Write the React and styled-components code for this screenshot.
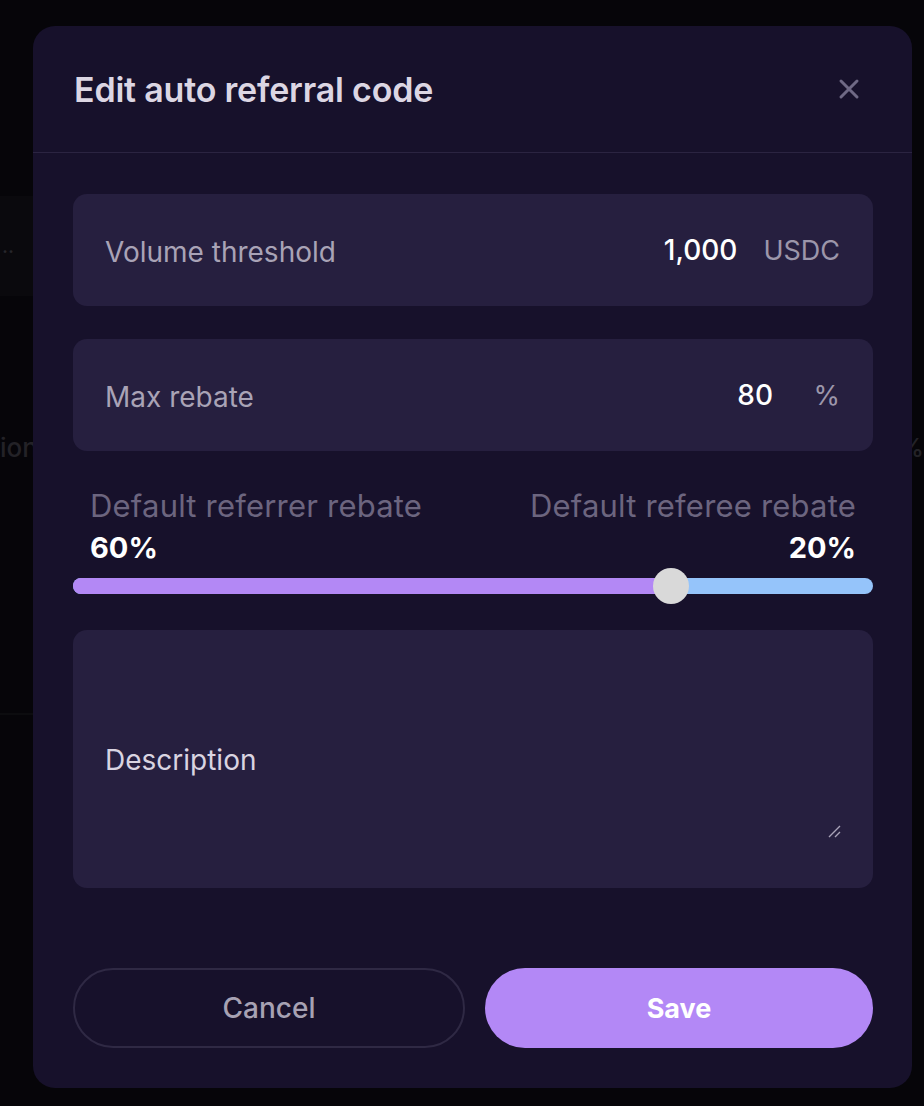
import React, { useState } from "react";
import styled, { createGlobalStyle } from "styled-components";

const Global = createGlobalStyle`
  html, body {
    margin: 0;
    padding: 0;
    background: #060509;
    font-family: Inter, "Noto Sans", sans-serif;
  }
  * { box-sizing: border-box; }
`;

const Page = styled.div`
  position: relative;
  width: 924px;
  height: 1106px;
  overflow: hidden;
  background: #060509;
`;

const Backdrop = styled.div`
  display: flex;
  flex-direction: column;
  padding-top: 196px;
  color: #232227;
  font-size: 26px;
  font-weight: 500;
`;

const BgPanel = styled.div`
  height: 100px;
  width: 60px;
  background: #0a090d;
  display: flex;
  align-items: center;
  padding-left: 2px;
  color: #27262b;
  font-size: 20px;
`;

const BgRow = styled.div`
  display: flex;
  justify-content: space-between;
  margin-top: 136px;
  padding-right: 0;
`;

const BgLine = styled.div`
  margin-top: 250px;
  height: 2px;
  width: 60px;
  background: #0c0c0f;
`;

const Overlay = styled.div`
  position: absolute;
  inset: 0;
  display: flex;
  justify-content: flex-start;
  align-items: flex-start;
  padding: 26px 0 0 33px;
`;

const Modal = styled.div`
  width: 879px;
  height: 1062px;
  background: #17112b;
  border-radius: 22px;
  display: flex;
  flex-direction: column;
`;

const Header = styled.div`
  height: 127px;
  padding: 0 52px 0 41px;
  display: flex;
  align-items: center;
  justify-content: space-between;
  border-bottom: 1px solid #2b2441;
`;

const Title = styled.h2`
  margin: 0;
  font-size: 34px;
  font-weight: 600;
  letter-spacing: -0.2px;
  color: #dcd6e3;
`;

const CloseButton = styled.button`
  background: none;
  border: none;
  padding: 0;
  width: 22px;
  height: 22px;
  display: flex;
  cursor: pointer;
`;

const Body = styled.div`
  padding: 41px 39px 40px 40px;
  display: flex;
  flex-direction: column;
`;

const Field = styled.div`
  height: 112px;
  margin-top: ${(p) => p.$mt || 0}px;
  border-radius: 14px;
  background: #261f3f;
  display: flex;
  align-items: center;
  padding: 0 33px 0 32px;
`;

const FieldLabel = styled.span`
  flex: 1;
  font-size: 28px;
  color: #a9a3b6;
  padding-top: 4px;
`;

const Value = styled.span`
  font-size: 28px;
  font-weight: 500;
  color: #ffffff;
`;

const Unit = styled.span`
  margin-left: 26px;
  min-width: ${(p) => p.$w || 0}px;
  text-align: right;
  font-size: 27px;
  color: #9c96aa;
`;

const SliderBlock = styled.div`
  margin-top: 38px;
  display: flex;
  flex-direction: column;
`;

const SplitRow = styled.div`
  display: flex;
  justify-content: space-between;
  padding: 0 17px;
`;

const SplitLabel = styled.span`
  font-size: 31px;
  line-height: 34px;
  letter-spacing: 0.2px;
  color: #6c657f;
`;

const SplitValue = styled.span`
  margin-top: 8px;
  font-size: 29px;
  line-height: 34px;
  font-weight: 700;
  color: #ffffff;
`;

const Track = styled.div`
  position: relative;
  margin-top: 13px;
  height: 16px;
  border-radius: 8px;
  background: #95c4fa;
  display: flex;
`;

const Fill = styled.div`
  height: 100%;
  border-radius: 8px 0 0 8px;
  background: #b388f5;
`;

const Thumb = styled.div`
  position: absolute;
  top: 50%;
  width: 36px;
  height: 36px;
  border-radius: 50%;
  background: #d9d9d9;
  transform: translate(-50%, -50%);
`;

const DescBox = styled.div`
  position: relative;
  margin-top: 36px;
  height: 258px;
  border-radius: 14px;
  background: #261f3f;
`;

const TextArea = styled.textarea`
  width: 100%;
  height: 100%;
  border: none;
  outline: none;
  resize: none;
  background: transparent;
  padding: 113px 32px 20px;
  font-family: Inter, "Noto Sans", sans-serif;
  font-size: 28px;
  color: #ffffff;
  &::placeholder {
    color: #d9d4e1;
  }
`;

const Grip = styled.svg`
  position: absolute;
  right: 32px;
  bottom: 50px;
`;

const Actions = styled.div`
  margin-top: 80px;
  display: grid;
  grid-template-columns: 392px 388px;
  column-gap: 20px;
`;

const Button = styled.button`
  height: 80px;
  border-radius: 40px;
  font-family: Inter, "Noto Sans", sans-serif;
  font-size: ${(p) => (p.$primary ? 27 : 28)}px;
  cursor: pointer;
  border: ${(p) => (p.$primary ? "none" : "2px solid #2f2944")};
  background: ${(p) => (p.$primary ? "#b388f6" : "transparent")};
  color: ${(p) => (p.$primary ? "#ffffff" : "#a7a2b3")};
  font-weight: ${(p) => (p.$primary ? 700 : 500)};
`;

export default function App() {
  const [split] = useState(0.747);
  const [desc, setDesc] = useState("");

  return (
    <Page>
      <Global />
      <Backdrop>
        <BgPanel>..</BgPanel>
        <BgRow>
          <span>ion</span>
          <span>%</span>
        </BgRow>
        <BgLine />
      </Backdrop>
      <Overlay>
        <Modal>
          <Header>
            <Title>Edit auto referral code</Title>
            <CloseButton aria-label="Close">
              <svg width="22" height="22" viewBox="0 0 22 22">
                <path
                  d="M3 3L19 19M19 3L3 19"
                  stroke="#6f6985"
                  strokeWidth="3"
                  strokeLinecap="round"
                />
              </svg>
            </CloseButton>
          </Header>
          <Body>
            <Field>
              <FieldLabel>Volume threshold</FieldLabel>
              <Value>1,000</Value>
              <Unit>USDC</Unit>
            </Field>
            <Field $mt={33}>
              <FieldLabel>Max rebate</FieldLabel>
              <Value>80</Value>
              <Unit $w={41}>%</Unit>
            </Field>
            <SliderBlock>
              <SplitRow>
                <SplitLabel>Default referrer rebate</SplitLabel>
                <SplitLabel>Default referee rebate</SplitLabel>
              </SplitRow>
              <SplitRow>
                <SplitValue>60%</SplitValue>
                <SplitValue>20%</SplitValue>
              </SplitRow>
              <Track>
                <Fill style={{ width: `${split * 100}%` }} />
                <Thumb style={{ left: `${split * 100}%` }} />
              </Track>
            </SliderBlock>
            <DescBox>
              <TextArea
                placeholder="Description"
                value={desc}
                onChange={(e) => setDesc(e.target.value)}
              />
              <Grip width="14" height="14" viewBox="0 0 14 14">
                <path d="M2 13L13 2M8 13L13 8" stroke="#a9a3b8" strokeWidth="1.4" />
              </Grip>
            </DescBox>
            <Actions>
              <Button>Cancel</Button>
              <Button $primary>Save</Button>
            </Actions>
          </Body>
        </Modal>
      </Overlay>
    </Page>
  );
}
